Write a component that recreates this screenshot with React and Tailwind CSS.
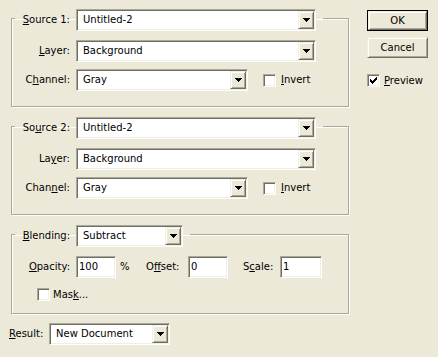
import React from 'react';

const sunken =
  'border border-t-[#ACA899] border-l-[#ACA899] border-b-white border-r-white shadow-[inset_1px_1px_0_#716F64,inset_-1px_-1px_0_#F1EFE2] bg-white';
const raised =
  'border border-t-[#F1EFE2] border-l-[#F1EFE2] border-b-[#716F64] border-r-[#716F64] shadow-[inset_1px_1px_0_#fff,inset_-1px_-1px_0_#ACA899] bg-[#ECE9D8]';
const etched =
  'border border-[#ACA899] shadow-[inset_1px_1px_0_#fff,1px_1px_0_#fff]';

// label with one underlined access key
const Label = ({ pre, key_, post }) => (
  <>
    {pre}
    <u>{key_}</u>
    {post}
  </>
);

const Select = ({ value, className }) => (
  <div className={`${sunken} ${className} h-[22px] flex items-center p-[1px]`}>
    <span className="flex-1 pl-[5px] whitespace-nowrap">{value}</span>
    <div className={`${raised} w-[16px] h-full flex items-center justify-center`}>
      <svg width="7" height="4" viewBox="0 0 7 4">
        <path d="M0 0h7v1H0zM1 1h5v1H1zM2 2h3v1H2zM3 3h1v1H3z" fill="#000" />
      </svg>
    </div>
  </div>
);

const Input = ({ value, className }) => (
  <div className={`${sunken} ${className} h-[22px] flex items-center pl-[2px]`}>
    {value}
  </div>
);

const Checkbox = ({ checked }) => (
  <div className={`${sunken} w-[13px] h-[13px] flex items-center justify-center shrink-0`}>
    {checked && (
      <svg width="7" height="7" viewBox="0 0 7 7">
        <path
          d="M6 0h1v1H6zM5 1h2v1H5zM0 2h1v1H0zM4 2h3v1H4zM0 3h2v1H0zM3 3h3v1H3zM0 4h5v1H0zM1 5h3v1H1zM2 6h1v1H2z"
          fill="#000"
        />
      </svg>
    )}
  </div>
);

const Button = ({ children, isDefault }) =>
  isDefault ? (
    <div className="border border-black h-[21px] w-[61px]">
      <div className={`${raised} h-full flex items-center justify-center`}>{children}</div>
    </div>
  ) : (
    <div className={`${raised} h-[21px] w-[61px] flex items-center justify-center`}>{children}</div>
  );

const SourceGroup = ({ n, srcKey, layerKey, chanKey, className }) => (
  <fieldset className={`${etched} ml-[2px] w-[338px] pb-[15px] ${className}`}>
    <legend className="ml-[3px] pr-[7px]">
      <div className="flex items-center h-[22px] -mb-[3px]">
        <span className="w-[55px] text-right whitespace-nowrap">{srcKey}</span>
        <Select value="Untitled-2" className="ml-[6px] w-[240px]" />
      </div>
    </legend>
    <div className="pl-[3px] mt-[12px] flex items-center h-[22px]">
      <span className="w-[55px] text-right">{layerKey}</span>
      <Select value="Background" className="ml-[6px] w-[240px]" />
    </div>
    <div className="pl-[3px] mt-[7px] flex items-center h-[22px]">
      <span className="w-[55px] text-right">{chanKey}</span>
      <Select value="Gray" className="ml-[6px] w-[172px]" />
      <div className="ml-[15px]">
        <Checkbox />
      </div>
      <span className="ml-[5px]">
        <u>I</u>nvert
      </span>
    </div>
  </fieldset>
);

export default function App() {
  return (
    <div className="w-[438px] h-[357px] bg-[#ECE9D8] text-black font-['DejaVu_Sans',sans-serif] text-[10px] leading-none flex overflow-hidden">
      <div className="pl-[9px] pt-[9px] w-[349px]">
        <SourceGroup
          srcKey={<Label pre="" key_="S" post="ource 1:" />}
          layerKey={<Label pre="" key_="L" post="ayer:" />}
          chanKey={<Label pre="C" key_="h" post="annel:" />}
        />
        <SourceGroup
          className="mt-[10px]"
          srcKey={<Label pre="So" key_="u" post="rce 2:" />}
          layerKey={<Label pre="La" key_="y" post="er:" />}
          chanKey={<Label pre="Chan" key_="n" post="el:" />}
        />

        <fieldset className={`${etched} ml-[2px] mt-[10px] w-[338px] pb-[12px]`}>
          <legend className="ml-[3px] pr-[7px]">
            <div className="flex items-center h-[22px] -mb-[3px]">
              <span className="w-[55px] text-right">
                <u>B</u>lending:
              </span>
              <Select value="Subtract" className="ml-[6px] w-[107px]" />
            </div>
          </legend>
          <div className="pl-[3px] mt-[12px] flex items-center h-[22px]">
            <span className="w-[55px] text-right">
              <u>O</u>pacity:
            </span>
            <Input value="100" className="ml-[6px] w-[40px]" />
            <span className="ml-[4px] w-[26px]">%</span>
            <span className="w-[42px]">
              O<u>f</u>fset:
            </span>
            <Input value="0" className="w-[40px]" />
            <span className="ml-[15px] w-[37px]">
              S<u>c</u>ale:
            </span>
            <Input value="1" className="w-[42px]" />
          </div>
          <div className="pl-[25px] mt-[10px] flex items-center h-[13px]">
            <Checkbox />
            <span className="ml-[3px]">
              Mas<u>k</u>...
            </span>
          </div>
        </fieldset>

        <div className="mt-[9px] flex items-center h-[22px]">
          <span className="w-[40px]">
            <u>R</u>esult:
          </span>
          <Select value="New Document" className="w-[121px]" />
        </div>
      </div>

      <div className="ml-[18px] pt-[10px] w-[61px]">
        <Button isDefault>OK</Button>
        <div className="mt-[6px]">
          <Button>Cancel</Button>
        </div>
        <div className="mt-[16px] flex items-center">
          <Checkbox checked />
          <span className="ml-[4px]">
            <u>P</u>review
          </span>
        </div>
      </div>
    </div>
  );
}
